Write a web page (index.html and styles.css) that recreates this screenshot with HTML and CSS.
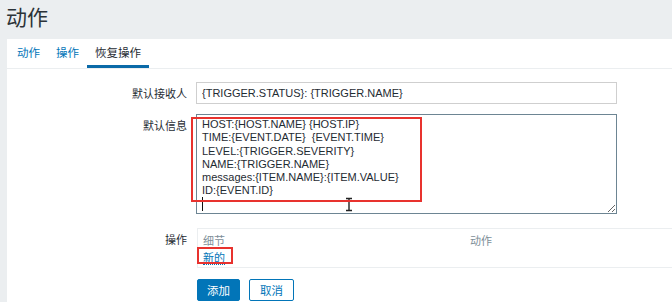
FILE: index.html
```html
<!DOCTYPE html>
<html lang="zh">
<head>
<meta charset="utf-8">
<title>动作</title>
<link rel="stylesheet" href="styles.css">
</head>
<body>
<header class="page-header"><h1 class="title">动作</h1></header>
<main class="panel">
  <nav class="tabs">
    <a class="tab">动作</a>
    <a class="tab">操作</a>
    <a class="tab active">恢复操作</a>
  </nav>
  <div class="form">
    <div class="row row-input">
      <label class="label">默认接收人</label>
      <div class="field"><input class="text-input" type="text" value="{TRIGGER.STATUS}: {TRIGGER.NAME}"></div>
    </div>
    <div class="row row-textarea">
      <label class="label">默认信息</label>
      <div class="field field-rel">
        <textarea class="text-area">HOST:{HOST.NAME} {HOST.IP}
TIME:{EVENT.DATE}  {EVENT.TIME}
LEVEL:{TRIGGER.SEVERITY}
NAME:{TRIGGER.NAME}
messages:{ITEM.NAME}:{ITEM.VALUE}
ID:{EVENT.ID}
</textarea>
        <span class="caret"></span>
        <svg class="ibeam" width="8" height="15" viewBox="0 0 8 15"><path d="M1 1.5h6M1 13.5h6M4 1.5v12" stroke="#222" stroke-width="1.4" fill="none"/></svg>
        <span class="mark mark-msg"></span>
      </div>
    </div>
    <div class="row row-ops">
      <label class="label">操作</label>
      <div class="field field-rel">
        <div class="ops">
          <div class="ops-head"><span class="col-detail">细节</span><span class="col-action">动作</span></div>
          <div class="ops-body"><a class="new-link">新的</a></div>
        </div>
        <span class="mark mark-new"></span>
      </div>
    </div>
    <div class="row row-buttons">
      <span class="label"></span>
      <div class="field buttons">
        <button class="btn btn-primary">添加</button>
        <button class="btn btn-alt">取消</button>
      </div>
    </div>
  </div>
</main>
</body>
</html>
```
FILE: styles.css
```css
* { box-sizing: border-box; }
html, body { margin: 0; padding: 0; height: 100%; overflow: hidden; }
body {
  background: #ebeef0;
  font-family: "Noto Sans CJK SC", "Liberation Sans", sans-serif;
  color: #1f2c33;
  font-size: 11px;
}
.page-header { height: 39px; padding-left: 6px; }
.title {
  margin: 0;
  font-size: 21px;
  font-weight: 400;
  line-height: 32px;
  color: #2b3338;
  font-family: "Noto Sans CJK SC", sans-serif;
}
.panel {
  background: #fff;
  margin-left: 7px;
  height: 263px;
}
.tabs {
  display: flex;
  height: 30px;
  padding-left: 2px;
  border-bottom: 1px solid #ebeef0;
}
.tab {
  display: block;
  padding: 0 8px;
  font-size: 11.5px;
  line-height: 27px;
  color: #0275b8;
  border-bottom: 3px solid transparent;
}
.tab.active { color: #1f2c33; border-bottom-color: #0a6aa8; }
.form { padding-top: 13px; }
.row { display: flex; align-items: flex-start; }
.label {
  width: 180px;
  flex: none;
  text-align: right;
  line-height: 22px;
  font-size: 11px;
  margin-right: 9px;
}
.field { width: 421px; }
.field-rel { position: relative; }
.row-textarea { margin-top: 10px; }
.row-ops { margin-top: 14px; }
.row-ops .field { width: 480px; }
.row-buttons { margin-top: 11px; }
.text-input {
  display: block;
  width: 421px;
  height: 22px;
  border: 1px solid #cfcfcf;
  padding: 0 5px;
  font-family: "Liberation Sans", sans-serif;
  font-size: 11px;
  color: #1f2c33;
  outline: none;
}
.text-area {
  display: block;
  width: 421px;
  height: 100px;
  border: 1px solid #6d8593;
  padding: 3px 5px;
  font-family: "Liberation Sans", sans-serif;
  font-size: 11px;
  line-height: 13.3px;
  color: #1f2c33;
  resize: both;
  outline: none;
  overflow: hidden;
}
.caret {
  position: absolute;
  left: 6px;
  top: 83px;
  width: 1px;
  height: 14px;
  background: #111;
}
.ibeam { position: absolute; left: 149px; top: 83px; }
.mark {
  position: absolute;
  border-width: 2px;
  border-style: solid;
  border-color: #e8322e;
  background: transparent;
  z-index: 2;
}
.mark-msg { left: -5px; top: 3px; width: 231px; height: 85px; }
.mark-new { left: 1px; top: 19px; width: 36px; height: 17px; }
.ops {
  margin-left: 1px;
  border: 1px solid #ebeef0;
  border-right: none;
  height: 40px;
  padding: 3px 0 0 5px;
}
.ops-head { display: flex; line-height: 16px; color: #7d8e98; }
.col-detail { width: 267px; }
.ops-body { line-height: 16px; margin-top: 1px; }
.new-link {
  color: #0275b8;
  border-bottom: 1px dotted #0275b8;
  line-height: 13px;
  display: inline-block;
}
.buttons { display: flex; gap: 9px; padding-left: 1px; }
.btn {
  height: 22px;
  font-family: "Noto Sans CJK SC", sans-serif;
  font-size: 11.5px;
  padding: 0;
  line-height: 20px;
  border-radius: 2px;
}
.btn-primary { width: 43px; background: #0275b8; color: #fff; border: 1px solid #0275b8; }
.btn-alt { width: 45px; background: #fff; color: #0275b8; border: 1px solid #0275b8; }
```
